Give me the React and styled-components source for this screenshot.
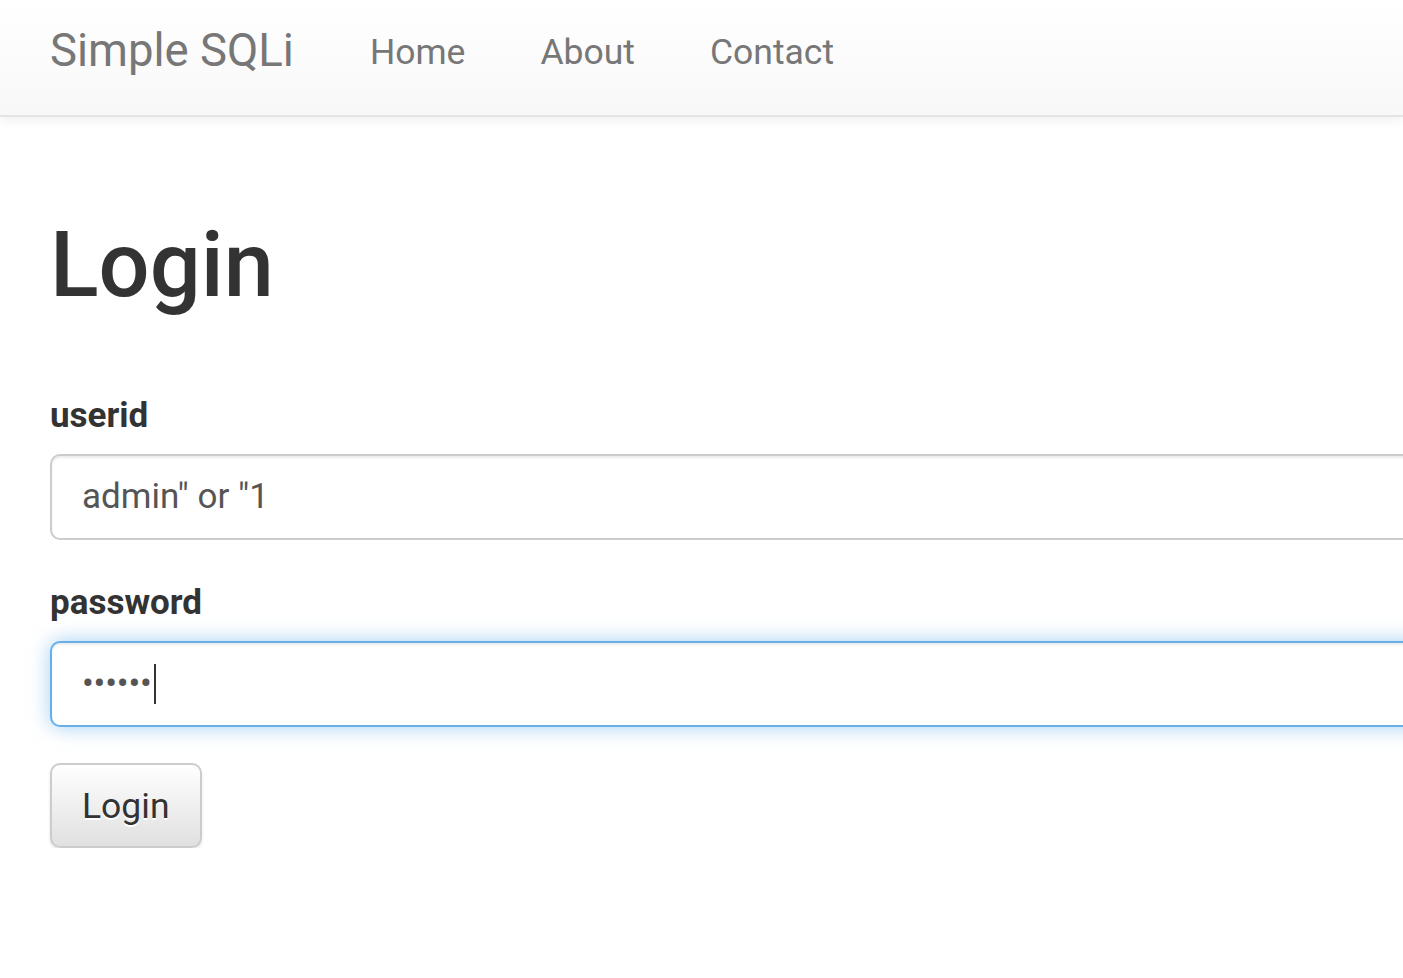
import React from "react";
import styled, { createGlobalStyle } from "styled-components";

const Global = createGlobalStyle`
  html, body { margin: 0; padding: 0; background: #fff; overflow: hidden; }
  body { font-family: Roboto, "Liberation Sans", Arial, sans-serif; color: #333; }
  * { box-sizing: border-box; }
`;

const Navbar = styled.nav`
  height: 119px;
  display: flex;
  align-items: flex-start;
  padding-left: 50px;
  background: linear-gradient(to bottom, #ffffff 0%, #f8f8f8 100%);
  border-top: 2px solid #ececec;
  border-bottom: 2px solid #e4e4e4;
  box-shadow: 0 2px 12px rgba(0, 0, 0, 0.075);
  margin-top: -2px;
`;

const Brand = styled.a`
  font-size: 45.5px;
  line-height: 50px;
  padding-top: 26px;
  color: #777;
  text-decoration: none;
  margin-right: 76px;
`;

const NavList = styled.ul`
  display: flex;
  list-style: none;
  margin: 0;
  padding: 0;
  gap: 75px;
`;

const NavLink = styled.a`
  display: block;
  font-size: 35.5px;
  line-height: 50px;
  padding-top: 27px;
  color: #777;
  text-decoration: none;
`;

const Main = styled.main`
  padding: 99px 0 0 50px;
  width: 1500px;
`;

const Title = styled.h1`
  margin: 0 0 76px;
  font-size: 90px;
  line-height: 99px;
  font-weight: 500;
  color: #333;
`;

const Group = styled.div`
  margin-bottom: ${(p) => p.$gap || 38}px;
`;

const Label = styled.label`
  display: block;
  font-size: 35px;
  line-height: 50px;
  font-weight: 700;
  color: #333;
  margin-bottom: 13px;
`;

const Field = styled.div`
  display: flex;
  align-items: center;
  height: 86px;
  padding: 0 30px;
  font-size: 35px;
  line-height: 50px;
  color: #555;
  background: #fff;
  border: 2px solid ${(p) => (p.$focus ? "#66afe9" : "#ccc")};
  border-radius: 10px;
  box-shadow: ${(p) =>
    p.$focus
      ? "inset 0 2px 2px rgba(0,0,0,.075), 0 0 20px rgba(102,175,233,.6)"
      : "inset 0 2px 2px rgba(0,0,0,.075)"};
`;

const Dots = styled.span`
  font-size: 35px;
  letter-spacing: -0.2px;
  color: #555;
`;

const Caret = styled.span`
  display: inline-block;
  width: 2px;
  height: 40px;
  background: #333;
  margin-left: 2px;
`;

const Button = styled.button`
  width: 152px;
  height: 85px;
  padding: 0 30px;
  font-family: inherit;
  font-size: 35.5px;
  line-height: 50px;
  text-align: left;
  color: #333;
  text-shadow: 0 2px 0 #fff;
  background: linear-gradient(to bottom, #ffffff 0%, #e0e0e0 100%);
  border: 2px solid #ccc;
  border-radius: 10px;
  box-shadow: 0 2px 3px rgba(0, 0, 0, 0.1);
  cursor: pointer;
`;

export default function App() {
  return (
    <>
      <Global />
      <Navbar>
        <Brand href="#">Simple SQLi</Brand>
        <NavList>
          <li><NavLink href="#">Home</NavLink></li>
          <li><NavLink href="#">About</NavLink></li>
          <li><NavLink href="#">Contact</NavLink></li>
        </NavList>
      </Navbar>
      <Main>
        <Title>Login</Title>
        <Group>
          <Label>userid</Label>
          <Field>admin" or "1</Field>
        </Group>
        <Group $gap={36}>
          <Label>password</Label>
          <Field $focus>
            <Dots>••••••</Dots>
            <Caret />
          </Field>
        </Group>
        <Button>Login</Button>
      </Main>
    </>
  );
}
